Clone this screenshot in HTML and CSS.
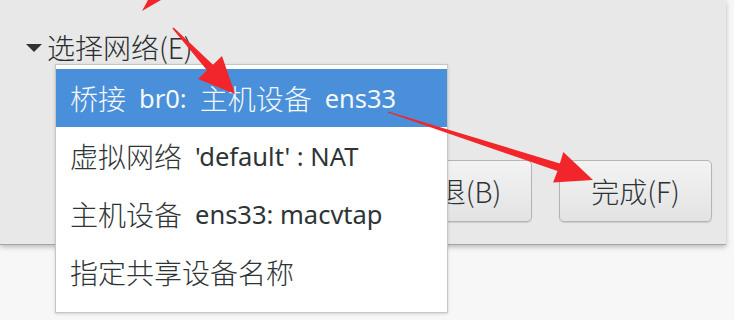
FILE: index.html
```html
<!DOCTYPE html>
<html lang="zh-CN">
<head>
<meta charset="utf-8">
<title>选择网络</title>
<link rel="stylesheet" href="styles.css">
</head>
<body>
<div class="page">
  <div class="panel">
    <div class="expander">
      <svg class="tri" width="16" height="9" viewBox="0 0 16 9"><polygon points="0,0 16,0 8,8" fill="#2e3436"/></svg>
      <span class="cjk">选择网络(E)</span>
    </div>
    <div class="buttons">
      <div class="btn"><span class="cjk">后退(B)</span></div>
      <div class="btn"><span class="cjk">完成(F)</span></div>
    </div>
  </div>
  <div class="menu">
    <div class="item selected"><span class="cjk">桥接</span><span class="lat">br0:</span><span class="cjk">主机设备</span><span class="lat">ens33</span></div>
    <div class="item"><span class="cjk">虚拟网络</span><span class="lat">'default' : NAT</span></div>
    <div class="item"><span class="cjk">主机设备</span><span class="lat">ens33: macvtap</span></div>
    <div class="item"><span class="cjk">指定共享设备名称</span></div>
  </div>
  <svg class="arrows" width="734" height="320" viewBox="0 0 734 320">
    <polygon fill="#f2262a" points="148,0 161,0 142,11"/>
    <polygon fill="#f2262a" points="173.6,27.4 213,64.8 222,56 235,94 198,79 207,70.2 172.4,28.6"/>
    <polygon fill="#f2262a" points="388.2,111.4 559.9,163.4 563.3,151.9 593,180 553.1,182.5 557.5,171 387.8,112.6"/>
  </svg>
</div>
</body>
</html>
```
FILE: styles.css
```css
html, body {
  margin: 0;
  padding: 0;
}
body {
  background: #f7f7f7;
  font-family: "Noto Sans", "Noto Sans CJK SC", sans-serif;
  color: #2e3436;
  width: 734px;
  height: 320px;
  overflow: hidden;
}
.page {
  position: relative;
  width: 734px;
  height: 320px;
}
.panel {
  width: 726px;
  height: 245px;
  background: #e8e8e8;
  border-bottom: 1px solid #a6a6a6;
  box-shadow: 0 2px 5px rgba(0, 0, 0, 0.25);
  display: flex;
  flex-direction: column;
  box-sizing: border-box;
  padding-top: 31px;
}
.cjk {
  font-family: "Noto Sans CJK SC", sans-serif;
  font-size: 28px;
  font-weight: 300;
}
.lat {
  font-family: "Noto Sans", sans-serif;
  font-size: 25.5px;
  margin-left: 13px;
}
.expander {
  display: flex;
  align-items: center;
  height: 32px;
  padding-left: 26px;
  gap: 5px;
  line-height: 32px;
  color: #2a2e30;
}
.tri {
  display: block;
  margin-top: 2px;
}
.buttons {
  display: flex;
  justify-content: flex-end;
  gap: 27px;
  margin-top: 97px;
  padding-right: 14px;
}
.btn {
  width: 153px;
  height: 62px;
  box-sizing: border-box;
  border: 1px solid #b4b4b4;
  border-radius: 5px;
  background: linear-gradient(#f3f3f3, #e3e3e3);
  box-shadow: 0 1px 1px rgba(0, 0, 0, 0.12);
  display: flex;
  align-items: center;
  justify-content: center;
  color: #2e3436;
}
.menu {
  position: absolute;
  left: 55px;
  top: 64px;
  width: 393px;
  height: 249px;
  box-sizing: border-box;
  background: #ffffff;
  border: 1px solid #c6c6c6;
  padding-top: 4px;
  box-shadow: 0 1px 3px rgba(0, 0, 0, 0.15);
}
.item {
  height: 58px;
  display: flex;
  align-items: center;
  padding-left: 14px;
  color: #2e3436;
  white-space: nowrap;
}
.item.selected {
  background: #4a8fd9;
  color: #f4f8fc;
}
.selected .cjk + .lat + .cjk {
  margin-left: 13px;
}
.arrows {
  position: absolute;
  left: 0;
  top: 0;
  pointer-events: none;
}
```
